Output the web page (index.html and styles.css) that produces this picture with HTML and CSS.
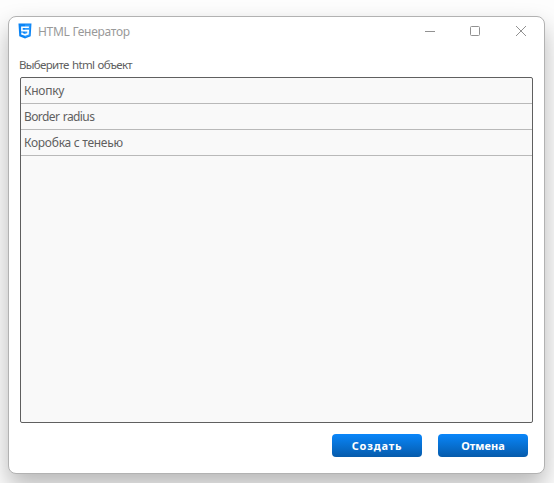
FILE: index.html
```
<!DOCTYPE html>
<html lang="ru">

<head>
  <meta charset="utf-8">
  <title>HTML Генератор</title>
  <link rel="stylesheet" href="styles.css">
</head>

<body>
  <div class="window">
    <div class="titlebar">
      <svg class="logo" width="14" height="16" viewBox="0 0 14 16">
        <path fill="#0a84f5" d="M.5 .4h13l-.8 12.8L7 15.4 1.3 13.2z"/>
        <path fill="#2b9bff" d="M7 1.4h5.4l-.7 11L7 14.2z"/>
        <path fill="none" stroke="#fff" stroke-width="1.6" d="M10.9 4.3H3.9v3.3h6.3l-.2 3.2-3 1-3-1V9.6"/>
      </svg>
      <span class="title">HTML Генератор</span>
      <div class="controls">
        <svg width="46" height="30" viewBox="0 0 46 30"><path d="M18 14.5h10"/></svg>
        <svg width="46" height="30" viewBox="0 0 46 30"><rect x="17.5" y="9.5" width="9" height="9" rx="1"/></svg>
        <svg width="46" height="30" viewBox="0 0 46 30"><path d="M17 9l10 10M27 9L17 19"/></svg>
      </div>
    </div>

    <div class="label">Выберите html объект</div>

    <div class="list">
      <div class="item">Кнопку</div>
      <div class="item radius">Border radius</div>
      <div class="item">Коробка с тенеью</div>
    </div>

    <div class="buttons">
      <button class="btn create">Создать</button>
      <button class="btn">Отмена</button>
    </div>
  </div>
</body>

</html>
```

FILE: styles.css
```
* {
  box-sizing: border-box;
}
body {
  margin: 0;
  height: 483px;
  padding: 16px 9px 9px 8px;
  overflow: hidden;
  background-color: #fdfdfd;
  font-family: "Noto Sans", "Open Sans", sans-serif;
  font-size: 12px;
  color: #606060;
}
.window {
  display: flex;
  flex-direction: column;
  width: 537px;
  height: 458px;
  padding: 0 11px;
  border: 1px solid #b2b2b2;
  border-radius: 8px;
  background-color: #fff;
  box-shadow: 0 12px 24px rgba(0, 0, 0, 0.28);
}
.titlebar {
  display: flex;
  height: 30px;
  margin: 0 -12px 0 -11px;
  padding-left: 9px;
}
.logo {
  margin-top: 6px;
}
.title {
  margin-left: 6px;
  line-height: 30px;
  letter-spacing: -0.29px;
  color: #999;
}
.controls {
  display: flex;
  margin-left: auto;
}
.controls svg {
  fill: none;
  stroke: #919191;
  stroke-width: 1;
}
.label {
  height: 30px;
  margin-left: -1px;
  padding-top: 10px;
  line-height: 16px;
  font-size: 11.5px;
  letter-spacing: -0.68px;
  word-spacing: 1px;
}
.list {
  width: 513px;
  height: 346px;
  border: 1px solid #5f5f5f;
  border-radius: 2px;
  background-color: #f9f9f9;
}
.item {
  height: 26px;
  padding-left: 3px;
  border-bottom: 1px solid #b9b9b9;
  line-height: 26px;
  letter-spacing: -0.27px;
}
.radius {
  letter-spacing: -0.6px;
  word-spacing: 1px;
}
.buttons {
  display: flex;
  justify-content: flex-end;
  gap: 16px;
  margin-top: 11px;
  padding-right: 5px;
}
.btn {
  width: 90px;
  height: 23px;
  padding: 0;
  border: 0;
  border-radius: 4px;
  background: linear-gradient(#0986fa, #065bab);
  color: #fff;
  font-family: inherit;
  font-size: 11px;
  font-weight: bold;
  line-height: 23px;
}
.create {
  letter-spacing: 0.8px;
}
```
